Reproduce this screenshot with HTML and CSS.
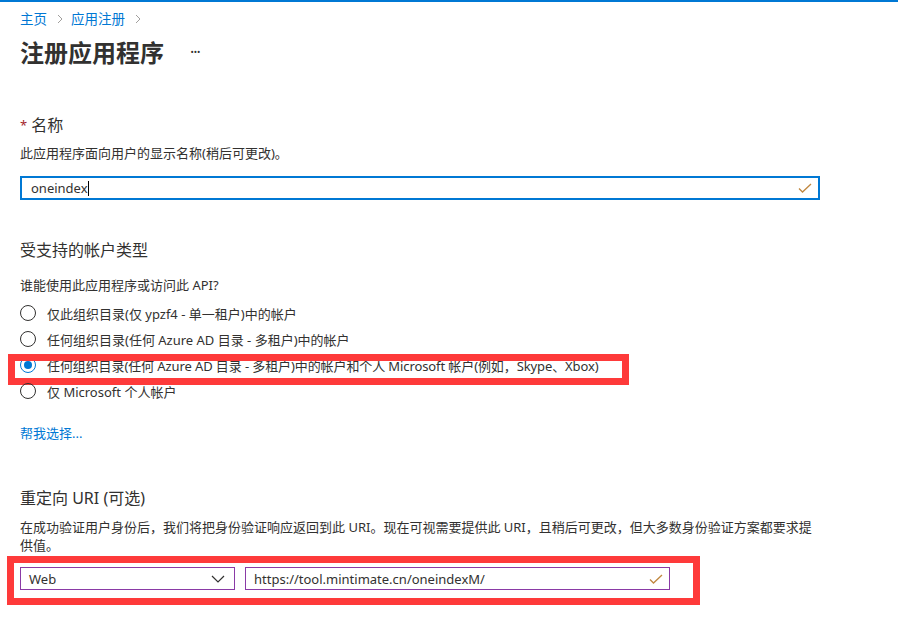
FILE: index.html
```html
<!DOCTYPE html>
<html lang="zh-CN">
<head>
<meta charset="utf-8">
<title>注册应用程序</title>
<link rel="stylesheet" href="styles.css">
</head>
<body>
<div class="topbar"></div>
<main class="page">
  <nav class="breadcrumb">
    <a class="crumb">主页</a>
    <svg class="sep" width="6" height="10" viewBox="0 0 6 10"><path d="M1 1 L5 5 L1 9" fill="none" stroke="#a19f9d" stroke-width="1"/></svg>
    <a class="crumb">应用注册</a>
    <svg class="sep" width="6" height="10" viewBox="0 0 6 10"><path d="M1 1 L5 5 L1 9" fill="none" stroke="#a19f9d" stroke-width="1"/></svg>
  </nav>
  <div class="title-row">
    <h1 class="title">注册应用程序</h1>
    <span class="more">···</span>
  </div>

  <section class="sec-name">
    <div class="label"><span class="req">*</span> 名称</div>
    <div class="desc">此应用程序面向用户的显示名称(稍后可更改)。</div>
    <div class="textbox focused">
      <span class="value">oneindex<span class="caret"></span></span>
      <svg class="check" width="14" height="10" viewBox="0 0 14 10"><path d="M1 5.5 L4.5 9 L13 1" fill="none" stroke="#c0873f" stroke-width="1.3"/></svg>
    </div>
  </section>

  <section class="sec-accounts">
    <div class="label">受支持的帐户类型</div>
    <div class="question">谁能使用此应用程序或访问此 API?</div>
    <div class="radios">
      <div class="radio-row"><span class="radio"></span><span>仅此组织目录(仅 ypzf4 - 单一租户)中的帐户</span></div>
      <div class="radio-row"><span class="radio"></span><span>任何组织目录(任何 Azure AD 目录 - 多租户)中的帐户</span></div>
      <div class="radio-row marked"><span class="radio checked"></span><span class="long">任何组织目录(任何 Azure AD 目录 - 多租户)中的帐户和个人 Microsoft 帐户(例如，Skype、Xbox)</span><span class="mark mark1"></span></div>
      <div class="radio-row"><span class="radio"></span><span>仅 Microsoft 个人帐户</span></div>
    </div>
    <a class="help">帮我选择...</a>
  </section>

  <section class="sec-redirect">
    <div class="label">重定向 URI (可选)</div>
    <div class="desc wrap">在成功验证用户身份后，我们将把身份验证响应返回到此 URI。现在可视需要提供此 URI，且稍后可更改，但大多数身份验证方案都要求提供值。</div>
    <div class="uri-row">
      <div class="select">
        <span>Web</span>
        <svg class="chev" width="14" height="8" viewBox="0 0 14 8"><path d="M1 1 L7 7 L13 1" fill="none" stroke="#323130" stroke-width="1.2"/></svg>
      </div>
      <div class="textbox purple">
        <span class="value">https://tool.mintimate.cn/oneindexM/</span>
        <svg class="check" width="14" height="10" viewBox="0 0 14 10"><path d="M1 5.5 L4.5 9 L13 1" fill="none" stroke="#c0873f" stroke-width="1.3"/></svg>
      </div>
      <span class="mark mark2"></span>
    </div>
  </section>
</main>
</body>
</html>
```
FILE: styles.css
```css
* { box-sizing: border-box; }
html, body { margin: 0; padding: 0; background: #fff; }
body {
  font-family: "Noto Sans", "Noto Sans CJK SC", sans-serif;
  font-size: 13px;
  color: #323130;
  width: 898px;
  height: 636px;
  overflow: hidden;
}
.topbar { height: 2px; background: #0078d4; }
.page { padding-left: 20px; width: 820px; }

.breadcrumb { margin-top: 8px; height: 18px; line-height: 18px; display: flex; align-items: center; font-size: 13.5px; }
.crumb { color: #0078d4; }
.sep { margin: 0 8px 0 10px; flex: none; }

.title-row { display: flex; align-items: center; margin-top: 8px; height: 32px; }
.title { margin: 0; font-size: 24px; font-weight: 700; line-height: 32px; font-family: "Noto Sans CJK SC", sans-serif; }
.more { margin-left: 26px; font-size: 16px; letter-spacing: -1px; line-height: 32px; }

.label { font-size: 16px; line-height: 22px; }
.req { color: #a4262c; font-size: 13px; vertical-align: top; }
.desc { line-height: 18px; }

.sec-name { margin-top: 46px; }
.sec-name .desc { margin-top: 8px; }

.textbox {
  display: flex; align-items: center; justify-content: space-between;
  height: 24px; margin-top: 14px; padding: 0 6px 0 9px;
}
.textbox.focused { border: 2px solid #0078d4; width: 800px; }
.value { display: flex; align-items: center; }
.caret { display: inline-block; width: 1px; height: 15px; background: #000; }

.sec-accounts { margin-top: 39px; }
.question { margin-top: 15px; line-height: 18px; }
.radios { margin-top: 6px; }
.radio-row { position: relative; display: flex; align-items: center; height: 26px; gap: 11px; }
.radio { width: 16px; height: 16px; border: 1.3px solid #323130; border-radius: 50%; flex: none; display: flex; align-items: center; justify-content: center; }
.radio.checked { border-color: #0078d4; }
.radio.checked::after { content: ""; width: 8px; height: 8px; border-radius: 50%; background: #0078d4; }
.long { letter-spacing: -0.1px; }

.mark { position: absolute; border: 7px solid #fe3a3a; pointer-events: none; }
.mark1 { left: -12px; top: 2px; width: 621px; height: 31px; }

.help { display: block; color: #0078d4; margin-top: 20px; line-height: 18px; }

.sec-redirect { margin-top: 45px; }
.sec-redirect .desc { margin-top: 9px; width: 800px; }

.uri-row { position: relative; display: flex; gap: 10px; margin-top: 13px; }
.select {
  width: 215px; height: 23px; border: 1px solid #8a3aa6;
  display: flex; align-items: center; justify-content: space-between; padding: 0 9px 0 8px;
}
.textbox.purple { width: 425px; height: 23px; margin-top: 0; border: 1px solid #8a3aa6; padding: 0 6px 0 8px; }
.mark2 { left: -13px; top: -11px; width: 693px; height: 49px; }
```
